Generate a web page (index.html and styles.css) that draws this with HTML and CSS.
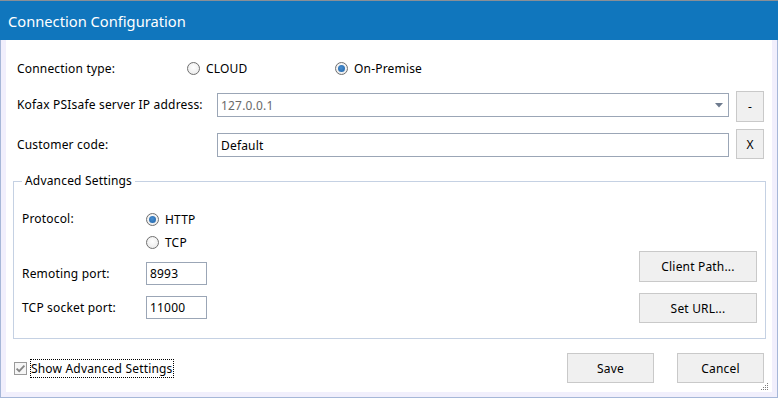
FILE: index.html
```html
<!DOCTYPE html>
<html>
<head>
<meta charset="utf-8">
<link rel="stylesheet" href="styles.css">
</head>
<body>
<div class="window">
  <div class="titlebar">Connection Configuration</div>
  <div class="frame">
    <div class="panel">
      <div class="row row-type">
        <span class="label lbl-type">Connection type:</span>
        <span class="radio r-cloud"><span class="circle"></span>CLOUD</span>
        <span class="radio"><span class="circle on"></span>On-Premise</span>
      </div>
      <div class="row row-ip">
        <span class="label lbl-main">Kofax PSIsafe server IP address:</span>
        <div class="box combo"><span class="val gray">127.0.0.1</span><svg class="arrow" width="8" height="5" viewBox="0 0 8 5"><path d="M0 0H8L4 4.5Z" fill="#6e7b8e"/></svg></div>
        <div class="btn sq sq-ip">-</div>
      </div>
      <div class="row row-cust">
        <span class="label lbl-main">Customer code:</span>
        <div class="box text"><span class="val">Default</span></div>
        <div class="btn sq sq-cust">X</div>
      </div>
      <fieldset class="group">
        <legend>Advanced Settings</legend>
        <div class="group-body">
          <div class="gcol">
            <div class="grow prot">
              <span class="glabel">Protocol:</span>
              <div class="radios">
                <span class="radio"><span class="circle on"></span>HTTP</span>
                <span class="radio r-tcp"><span class="circle"></span>TCP</span>
              </div>
            </div>
            <div class="grow port port-1">
              <span class="glabel">Remoting port:</span>
              <div class="box small"><span class="val">8993</span></div>
            </div>
            <div class="grow port port-2">
              <span class="glabel">TCP socket port:</span>
              <div class="box small"><span class="val">11000</span></div>
            </div>
          </div>
          <div class="bcol">
            <div class="btn wide b1">Client Path...</div>
            <div class="btn wide b2">Set URL...</div>
          </div>
        </div>
      </fieldset>
      <div class="bottom">
        <span class="check"><svg width="13" height="13" viewBox="0 0 13 13"><rect x="0.5" y="0.5" width="12" height="12" fill="#f6f6f6" stroke="#9a9a9a"/><path d="M2.6 6.6L5.2 9.2L10.4 3.6" fill="none" stroke="#858585" stroke-width="1.8"/></svg></span>
        <span class="check-label">Show Advanced Settings</span>
        <div class="btn act save">Save</div>
        <div class="btn act">Cancel</div>
      </div>
      <svg class="grip" width="8" height="8" viewBox="0 0 8 8">
        <g fill="#7d7d7d">
          <rect x="6" y="0" width="1" height="1"/>
          <rect x="4" y="2" width="1" height="1"/><rect x="6" y="2" width="1" height="1"/>
          <rect x="2" y="4" width="1" height="1"/><rect x="4" y="4" width="1" height="1"/><rect x="6" y="4" width="1" height="1"/>
          <rect x="0" y="6" width="1" height="1"/><rect x="2" y="6" width="1" height="1"/><rect x="4" y="6" width="1" height="1"/><rect x="6" y="6" width="1" height="1"/>
        </g>
      </svg>
    </div>
  </div>
</div>
</body>
</html>
```
FILE: styles.css
```css
* { box-sizing: border-box; }
html, body { margin: 0; padding: 0; background: #ffffff; }
body {
  font-family: "Noto Sans", "Open Sans", sans-serif;
  font-size: 12px;
  letter-spacing: 0.18px;
  color: #000;
}
.window {
  width: 778px;
  height: 398px;
  border-top: 1px solid #8a8f96;
  display: flex;
  flex-direction: column;
}
.titlebar {
  height: 39px;
  background: #1076bd;
  color: #fff;
  font-size: 14.7px;
  letter-spacing: 0;
  padding-left: 8px;
  display: flex;
  align-items: center;
  padding-top: 1px;
}
.frame {
  flex: 1;
  display: flex;
  background: #f1effc;
  border: 1px solid #a6b7d8;
  border-top: 0;
  padding: 0 5px 5px 5px;
}
.panel {
  flex: 1;
  background: #fff;
  position: relative;
  display: flex;
  flex-direction: column;
}
.row { display: flex; padding-left: 11px; }
.row-type { height: 24px; margin-top: 16px; align-items: center; }
.lbl-type { width: 170px; }
.radio { display: flex; align-items: center; gap: 6px; height: 20px; }
.r-cloud { width: 148px; }
.circle {
  width: 13px; height: 13px; border-radius: 50%;
  border: 1px solid #6f6f6f;
  background: radial-gradient(circle at 50% 40%, #ffffff 0%, #e6e6e6 100%);
  display: inline-flex; align-items: center; justify-content: center;
  flex: none;
}
.circle.on::after {
  content: ""; width: 7px; height: 7px; border-radius: 50%;
  background: radial-gradient(circle at 45% 40%, #4a8fd0 0%, #1e63a8 100%);
}
.row-ip { margin-top: 11px; align-items: flex-start; height: 31px; }
.row-cust { margin-top: 7px; align-items: flex-start; height: 30px; }
.lbl-main { width: 200px; height: 24px; line-height: 24px; }
.row-ip .lbl-main { margin-top: 2px; }
.row-cust .lbl-main { margin-top: 4px; }
.box {
  border: 1px solid #9ba6b6;
  height: 24px;
  display: flex;
  align-items: center;
  padding-left: 3px;
  background: #fff;
}
.combo { width: 512px; margin-top: 2px; padding-right: 5px; }
.text { width: 512px; margin-top: 4px; }
.val { flex: 1; }
.gray { color: #6a6a6a; }
.btn {
  background: #f0f0f0;
  border: 1px solid #c9c9c9;
  display: flex; align-items: center; justify-content: center;
  color: #000;
}
.sq { width: 28px; margin-left: 7px; }
.sq-ip { height: 31px; }
.sq-cust { height: 30px; }
.group {
  margin: 14px 6px 0 7px;
  padding: 0 0 15px 0;
  border: 1px solid #c5d1e3;
  min-width: 0;
}
.group legend {
  margin-left: 8px;
  padding: 0 3px;
  line-height: 16px;
}
.group-body { display: flex; }
.gcol { display: flex; flex-direction: column; padding-left: 8px; }
.grow { display: flex; }
.glabel { width: 124px; }
.prot { margin-top: 20px; }
.prot .glabel { height: 20px; line-height: 20px; }
.radios { display: flex; flex-direction: column; }
.r-tcp { margin-top: 3px; }
.port { align-items: center; height: 23px; }
.port-1 { margin-top: 10px; }
.port-2 { margin-top: 11px; }
.small { width: 61px; height: 23px; }
.bcol { margin-left: auto; margin-right: 8px; padding-top: 62px; display: flex; flex-direction: column; }
.wide { width: 118px; }
.b1 { height: 31px; }
.b2 { height: 30px; margin-top: 11px; }
.bottom {
  display: flex; align-items: center;
  margin-top: 14px; padding: 0 8px 0 8px;
  height: 30px;
}
.check { width: 13px; height: 13px; display: flex; }
.check-label {
  margin-left: 3px;
  border: 1px dotted #000;
  line-height: 17px;
  padding: 0 0 0 0;
}
.act { width: 87px; height: 30px; }
.save { margin-left: auto; margin-right: 23px; }
.grip { position: absolute; right: 3px; bottom: 1px; }
```
